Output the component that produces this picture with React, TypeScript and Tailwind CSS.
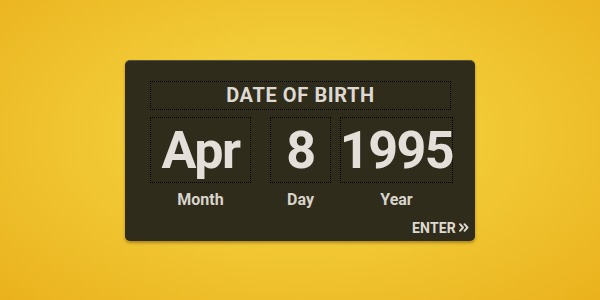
import React from "react";

const fields = [
    {value: "Apr", label: "Month", width: "w-[101px]"},
    {value: "8", label: "Day", width: "w-[61px]"},
    {value: "1995", label: "Year", width: "w-[113px]"},
];

const App: React.FC = () => {
    return (
        <div
            className="w-[600px] h-[300px] flex items-center justify-center bg-[radial-gradient(ellipse_at_50%_45%,#f4d84c_0%,#f1c935_45%,#eab21d_100%)]"
            style={{fontFamily: "Roboto, 'Liberation Sans', sans-serif"}}
        >
            {/* Panel */}
            <div
                className="relative w-[350px] h-[181px] rounded-[5px] bg-[#302c1c] border-t border-[#5a553f] shadow-[0_2px_3px_rgba(90,60,0,0.45)] pt-[20px] pl-[25px]">
                <div
                    className="w-[301px] h-[29px] border border-dotted border-black flex items-center justify-center">
                    <span className="text-[20px] font-bold text-[#dedad2] tracking-[0.6px] leading-none">
                        DATE OF BIRTH
                    </span>
                </div>

                <div className="flex mt-[7px]">
                    {fields.map((f, i) => (
                        <div key={f.label}
                             className={`flex flex-col items-center ${f.width} ${i === 1 ? "ml-[19px]" : i === 2 ? "ml-[9px]" : ""}`}>
                            <div
                                className="w-full h-[66px] border border-dotted border-black flex items-center justify-center">
                                <span
                                    className="text-[52px] font-bold text-[#e4e0d9] leading-none tracking-[-1.5px] mt-[3px]">
                                    {f.value}
                                </span>
                            </div>
                            <span className="mt-[9px] text-[16px] font-bold text-[#d8d4cb] leading-none">
                                {f.label}
                            </span>
                        </div>
                    ))}
                </div>

                <div className="absolute right-[6px] bottom-[6px] flex items-center gap-[3px]">
                    <span className="text-[14px] font-bold text-[#dedad2] leading-none tracking-[0.2px]">ENTER</span>
                    <svg width="10" height="9" viewBox="0 0 10 9" fill="none" stroke="#dedad2" strokeWidth="1.9"
                         strokeLinecap="round" strokeLinejoin="round">
                        <path d="M1 1.2 L4 4.5 L1 7.8"/>
                        <path d="M5.5 1.2 L8.5 4.5 L5.5 7.8"/>
                    </svg>
                </div>
            </div>
        </div>
    );
};

export default App;
